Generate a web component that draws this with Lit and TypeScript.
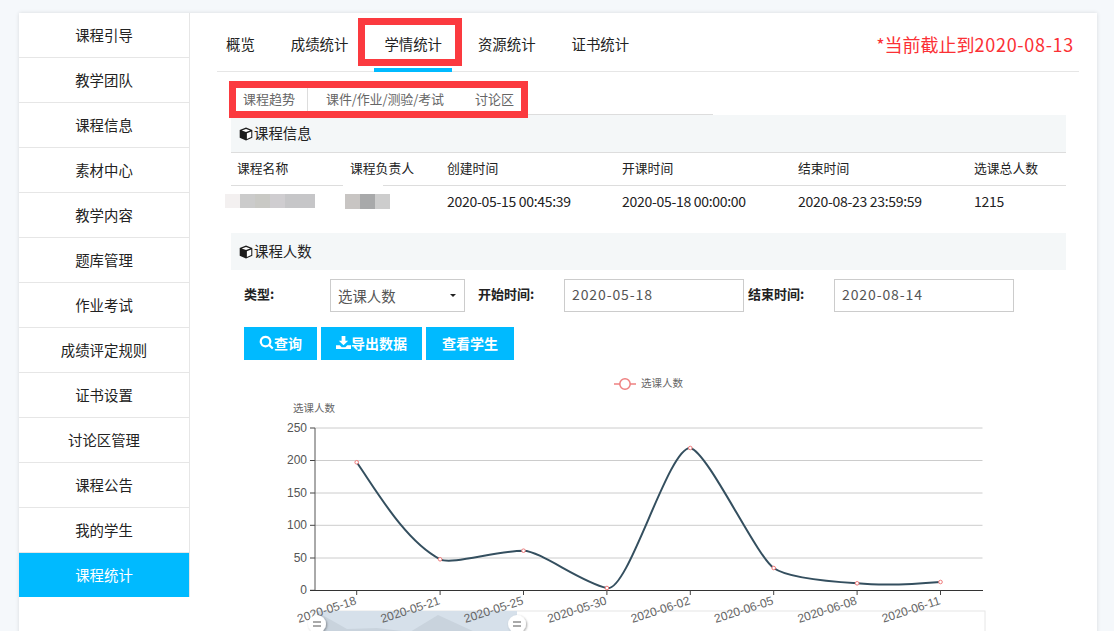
import { LitElement, html, css, svg } from "lit";
import { customElement } from "lit/decorators.js";

const MENU = ["课程引导","教学团队","课程信息","素材中心","教学内容","题库管理","作业考试","成绩评定规则","证书设置","讨论区管理","课程公告","我的学生","课程统计"];
const TABS = ["概览","成绩统计","学情统计","资源统计","证书统计"];
const HEAD = ["课程名称","课程负责人","创建时间","开课时间","结束时间","选课总人数"];
const XS = [356.7,440.1,523.5,606.9,690.3,773.7,857.1,940.5];
const YS = [462.3,559.3,550.7,588,448,568,583.3,582];
const LABELS = ["2020-05-18","2020-05-21","2020-05-25","2020-05-30","2020-06-02","2020-06-05","2020-06-08","2020-06-11"];
const GRID = [[250,428],[200,460.5],[150,493],[100,525.3],[50,558],[0,590.3]];
const CURVE = "M356.7,462.3 C376,490 405,541 440.1,559.3 C452,565 495,551 523.5,550.7 C541,551 580,582 606.9,588 C628,594 668,447 690.3,448 C708,452 756,556 773.7,568 C786,577 820,581 857.1,583.3 C875,585 905,585 940.5,582";

const cube = html`<svg class="cube" viewBox="0 0 16 16"><path d="M8 .6 15.2 3.4v9L8 15.4.8 12.4v-9Z" fill="#1c1c1c"/><path d="M8 2.2 12.8 4 8 5.8 3.2 4Z" fill="#fff"/><path d="M9 7.2 14 5.2V11.4L9 13.6Z" fill="#fff"/></svg>`;

@customElement("app-root")
export class AppRoot extends LitElement {
  static styles = css`
    :host{display:block;height:631px;overflow:hidden;background:#f5f8fb;font-family:"Noto Sans CJK SC","Liberation Sans",sans-serif;font-size:14.4px;color:#222;}
    .card{display:flex;align-items:flex-start;margin:13px 17px 0 19px;height:640px;background:#fff;box-shadow:0 0 4px rgba(0,0,0,.12);}
    .side{width:170px;flex:none;border-right:1px solid #e6e6e6;}
    .mi{height:44px;line-height:44px;text-align:center;border-bottom:1px solid #e6e6e6;}
    .mi.on{background:#00baff;color:#fff;border-bottom:0;}
    .main{flex:1;min-width:0;padding:0 18px 0 27px;position:relative;}
    .tabs{display:flex;height:59px;border-bottom:1px solid #e6e6e6;box-sizing:border-box;}
    .tab{box-sizing:border-box;height:59px;padding:6px 10px 0;margin-right:16px;line-height:49px;border-bottom:4px solid transparent;white-space:nowrap;}
    .tab:first-child{margin-left:-1px;}
    .tab.on{border-bottom-color:#00baff;}
    .notice{margin-left:auto;margin-right:5px;padding-top:2px;color:#fb3035;font-size:18px;line-height:58px;}
    .notice span{letter-spacing:.7px;}
    .body{margin:0 13px 0 14px;}
    .sub{display:flex;height:43px;width:482px;align-items:flex-end;border-bottom:1px solid #ddd;box-sizing:border-box;font-size:13px;color:#666;}
    .st{height:28px;line-height:26px;}
    .st.a{width:76px;border-right:1px solid #ddd;text-align:center;}
    .st.b{margin-left:18px;width:149px;letter-spacing:-.12px;}
    .bar{height:37px;background:#f4f7f8;display:flex;align-items:center;padding-left:8px;gap:1px;}
    .bar span{margin-top:-2px;}
    .bar.first{border-bottom:1px solid #ddd;}
    .cube{width:14px;height:14px;flex:none;}
    .row{display:grid;grid-template-columns:113px 97px 175px 176px 176px 1fr;align-items:center;}
    .row.h{box-sizing:border-box;height:33px;padding-bottom:4px;border-bottom:1px solid #ddd;font-size:12.8px;}
    .row.d{height:30px;margin-bottom:17px;font-size:14px;letter-spacing:-.3px;}
    .cell{padding-left:6px;position:relative;}
    .blur{display:flex;height:14px;}
    .blur i{display:block;height:100%;}
    .blur.one{width:90px;margin-left:-12px;}
    .blur.two{width:45px;height:15px;margin-left:-5px;}
    .patch{position:absolute;left:-1px;top:-12px;width:40px;height:9px;background:#fff;}
    .form{display:flex;align-items:flex-start;padding:9px 0 0 13px;height:48px;}
    .lab{font-weight:700;font-size:13px;line-height:30px;}
    .lab.t{width:31px;}
    .lab.s{margin-left:13px;width:86px;}
    .lab.e{margin-left:4px;width:86px;}
    .sel{box-sizing:border-box;width:135px;height:33px;border:1px solid #ccc;margin-left:55px;color:#555;display:flex;align-items:center;justify-content:space-between;padding:0 8px 0 7px;}
    .caret{width:0;height:0;border:3px solid transparent;border-top-color:#222;border-bottom:0;}
    .inp{box-sizing:border-box;width:180px;height:33px;line-height:29px;border:1px solid #ccc;padding-left:7px;color:#555;font-size:14px;letter-spacing:.9px;}
    .btns{display:flex;gap:4px;padding-left:13px;}
    .btn{box-sizing:border-box;height:33px;padding-bottom:2px;background:#00baff;color:#fff;font-weight:700;font-size:14px;display:flex;align-items:center;justify-content:center;gap:0;}
    .btn svg{width:15px;height:15px;fill:#fff;}
    .b1{width:73px;} .b2{width:101px;} .b3{width:88px;}
    .chart{display:block;margin-top:8px;width:835px;height:263px;}
    .chart text{font-family:"Noto Sans CJK SC","Liberation Sans",sans-serif;}
    .chart text.num{font-family:"Liberation Sans",sans-serif;}
    .mark{position:absolute;border:7px solid #fb3a3f;box-sizing:border-box;pointer-events:none;}
    .m1{left:168px;top:5px;width:104px;height:48px;}
    .m2{left:39px;top:68px;width:299px;height:37px;}
  `;

  render() {
    return html`<div class="card">
      <nav class="side">
        ${MENU.map((m,i)=>html`<div class="mi ${i===MENU.length-1?"on":""}">${m}</div>`)}
      </nav>
      <main class="main">
        <div class="tabs">
          ${TABS.map((t,i)=>html`<div class="tab ${i===2?"on":""}">${t}</div>`)}
          <div class="notice">*当前截止到<span>2020-08-13</span></div>
        </div>
        <div class="body">
          <div class="sub">
            <div class="st a">课程趋势</div>
            <div class="st b">课件/作业/测验/考试</div>
            <div class="st">讨论区</div>
          </div>
          <div class="bar first">${cube}<span>课程信息</span></div>
          <div class="row h">${HEAD.map(h=>html`<div class="cell">${h}</div>`)}</div>
          <div class="row d">
            <div class="cell"><div class="blur one"><i style="width:15px;background:#f3f0f0"></i><i style="width:15px;background:#cbcbcb"></i><i style="width:15px;background:#c9c9c5"></i><i style="width:15px;background:#cfcdd0"></i><i style="width:30px;background:#c6c6c8"></i></div></div>
            <div class="cell"><div class="patch"></div><div class="blur two"><i style="width:15px;background:#c8c5c3"></i><i style="width:15px;background:#a8a9aa"></i><i style="width:15px;background:#cdcdcd"></i></div></div>
            <div class="cell">2020-05-15 00:45:39</div>
            <div class="cell">2020-05-18 00:00:00</div>
            <div class="cell">2020-08-23 23:59:59</div>
            <div class="cell">1215</div>
          </div>
          <div class="bar">${cube}<span>课程人数</span></div>
          <div class="form">
            <div class="lab t">类型:</div>
            <div class="sel"><span>选课人数</span><span class="caret"></span></div>
            <div class="lab s">开始时间:</div>
            <div class="inp">2020-05-18</div>
            <div class="lab e">结束时间:</div>
            <div class="inp">2020-08-14</div>
          </div>
          <div class="btns">
            <div class="btn b1"><svg viewBox="0 0 16 16"><path d="M7 .8a6.2 6.2 0 1 0 3.6 11.2l3.3 3.3 1.6-1.6-3.3-3.3A6.2 6.2 0 0 0 7 .8Zm0 2.3a3.9 3.9 0 1 1 0 7.8 3.9 3.9 0 0 1 0-7.8Z"/></svg>查询</div>
            <div class="btn b2"><svg viewBox="0 0 16 16"><path d="M6 1h4v5h3L8 11 3 6h3ZM0 11h4l2 2h4l2-2h4v4H0Z"/></svg>导出数据</div>
            <div class="btn b3">查看学生</div>
          </div>
          ${this.chart()}
        </div>
        <div class="mark m1"></div>
        <div class="mark m2"></div>
      </main>
    </div>`;
  }

  chart() {
    return html`<svg class="chart" viewBox="231 368 835 263">
      ${svg`
      <line x1="614" x2="636" y1="384" y2="384" stroke="#ee8080" stroke-width="1.5"/>
      <circle cx="625" cy="384" r="5.2" fill="#fff" stroke="#ee8080" stroke-width="1.5"/>
      <text x="641" y="386.5" font-size="10.5" fill="#666">选课人数</text>
      <text x="293" y="412" font-size="10.5" fill="#666">选课人数</text>
      ${GRID.map(([v,y],i)=>svg`
        ${i<GRID.length-1?svg`<line x1="315" x2="982.5" y1="${y}" y2="${y}" stroke="#ccc"/>`:""}
        <line x1="310" x2="315" y1="${y}" y2="${y}" stroke="#444"/>
        <text class="num" x="307" y="${y+3.5}" font-size="12" text-anchor="end" fill="#555">${v}</text>`)}
      <line x1="315" x2="315" y1="428" y2="590.5" stroke="#555"/>
      <line x1="310" x2="983" y1="590.5" y2="590.5" stroke="#333"/>
      <rect x="313" y="611" width="672" height="30" fill="#fff" stroke="#e6e6e6"/>
      <rect x="317" y="611" width="200" height="30" fill="#d6e0ea"/>
      <path d="M317 612 L347 629 L377 628 L410 632 L438 615 L475 632 L475 641 L317 641Z" fill="#c9d3dd"/>
      ${XS.map((x,i)=>svg`
        <line x1="${x}" x2="${x}" y1="590.5" y2="595" stroke="#444"/>
        <text class="num" transform="translate(${x+0.5} 604) rotate(-18)" font-size="12" text-anchor="end" fill="#666">${LABELS[i]}</text>`)}
      <path d="${CURVE}" fill="none" stroke="#344f5f" stroke-width="2"/>
      ${XS.map((x,i)=>svg`<circle cx="${x}" cy="${YS[i]}" r="1.8" fill="#fff" stroke="#f07b7b" stroke-width="1"/>`)}
      <defs><filter id="hs" x="-50%" y="-50%" width="200%" height="200%"><feDropShadow dx="1" dy="1" stdDeviation="1.2" flood-color="#000" flood-opacity=".35"/></filter></defs>
      ${[317,517].map(x=>svg`
        <circle cx="${x}" cy="624" r="9" fill="#fff" filter="url(#hs)"/>
        <line x1="${x-4}" x2="${x+4}" y1="622" y2="622" stroke="#555" stroke-width="1"/>
        <line x1="${x-4}" x2="${x+4}" y1="626" y2="626" stroke="#555" stroke-width="1"/>`)}
      `}
    </svg>`;
  }
}
